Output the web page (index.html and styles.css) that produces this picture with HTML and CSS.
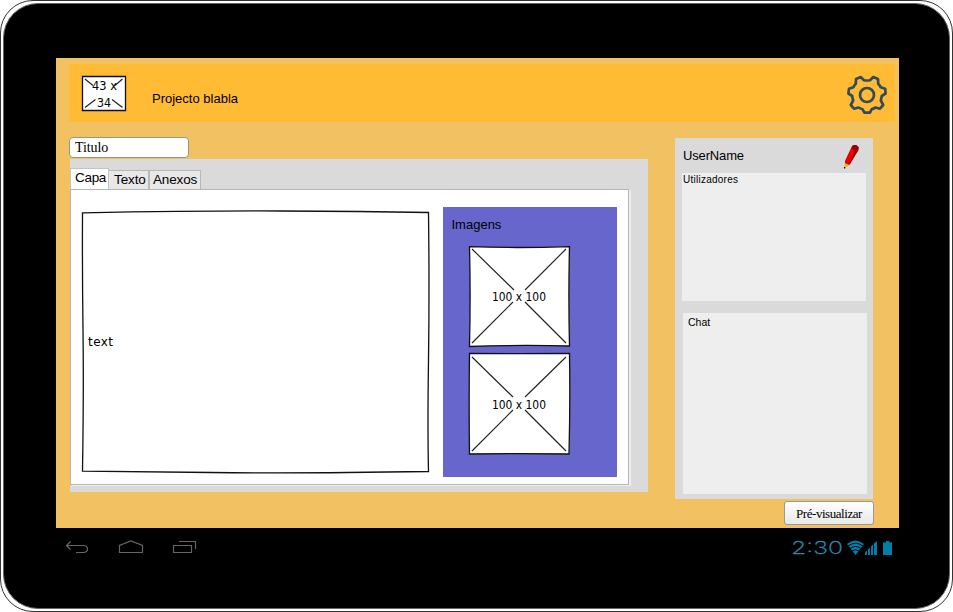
FILE: index.html
```html
<!DOCTYPE html>
<html lang="pt">
<head>
<meta charset="utf-8">
<title>Projecto blabla</title>
<link rel="stylesheet" href="styles.css">
</head>
<body>
<div class="tablet">
  <div class="bezel">
    <main class="screen">
      <header class="header">
        <svg class="logo" width="46" height="37" viewBox="0 0 46 37">
          <path class="frame" d="M1.500 1.500H44.500V35.500H1.500Z"/>
          <path class="cross" d="M4 4L12 10.500M41.500 4L34 10.500M4 32.500L14.500 24.500M41.500 32.500L31 24.500"/>
          <text x="11" y="15" textLength="25" lengthAdjust="spacingAndGlyphs">43 x</text>
          <text x="16" y="32" textLength="14" lengthAdjust="spacingAndGlyphs">34</text>
        </svg>
        <h1 class="project">Projecto blabla</h1>
        <svg class="gear" width="42" height="42" viewBox="-21 -21 42 42">
          <path d="M-6.300-18L-3-14.800Q0-14.200 3-14.800L6.300-18L11-16L11.200-11.300Q13-9.500 13.600-7.800L18.200-6.300L18.600-1.500L14.800 1Q14.200 4 13.800 5.500L16.200 10L13 13.700L8.500 12.500Q6.300 13.800 4.700 14.200L3 17.600H-2.600L-4.500 14.200Q-7 13.500-8.500 12.500L-13 13.700L-16.200 10L-13.800 5.500Q-14.600 3-14.800 1L-18.600-1.500L-18-6.300L-13.600-7.800Q-12.500-10-11.200-11.300L-11-16Z"/>
          <circle r="7"/>
        </svg>
      </header>
      <div class="columns">
        <section class="editor">
          <input class="title" type="text" value="Titulo" aria-label="Titulo">
          <div class="panel">
            <nav class="tabs">
              <span class="tab active">Capa</span><span class="tab texto">Texto</span><span class="tab anexos">Anexos</span>
            </nav>
            <div class="page">
              <svg class="textbox" width="350" height="264" viewBox="0 0 350 264">
                <path class="frame" d="M1.500 2.800Q120 .7 200 1T347.500 2.500Q348.500 80 347.500 150T347.500 261.500Q220 263.500 130 262.500T1.500 261.200Q2.800 180 2 120T1.500 2.800Z"/>
                <text class="hand" x="7" y="136" textLength="25">text</text>
              </svg>
              <section class="images">
                <h2>Imagens</h2>
                <svg class="thumb" width="103" height="103" viewBox="0 0 103 103">
                  <path class="frame" d="M1.500 1.700Q50 3.300 101.500 1.600Q100.300 50 101.500 101Q50 99.700 1.500 101.500Q2.700 50 1.500 1.700Z"/>
                  <path class="cross" d="M4 4L46 45M98 4L57 45M4 98L45 57M98 98L57 57"/>
                  <text x="24" y="55.500" textLength="54" lengthAdjust="spacingAndGlyphs">100 x 100</text>
                </svg>
                <svg class="thumb" width="103" height="103" viewBox="0 0 103 103">
                  <path class="frame" d="M1.500 1.500Q50 1.800 101.500 1.500Q102.300 50 101 102Q50 101.200 1.500 102Q.8 50 1.500 1.500Z"/>
                  <path class="cross" d="M4 5L45 45M98 5L57 45M4 99L45 58M98 99L57 58"/>
                  <text x="24" y="56.500" textLength="54" lengthAdjust="spacingAndGlyphs">100 x 100</text>
                </svg>
              </section>
            </div>
          </div>
        </section>
        <aside class="side">
          <div class="social">
            <div class="user">
              <span>UserName</span>
              <svg width="18" height="26" viewBox="0 0 18 26">
                <path fill="#e00000" d="M9 2L12 1L15.500 3V5L7 20L4 22L2 20V17Z"/>
                <path fill="#900" d="M9 2L11 1H13.500L15.500 3V6L7 20L5.500 21L12 7L9 5Z"/>
                <path fill="#f00000" d="M8.500 5L11 7L5 19L3 18Z"/>
                <path fill="#e5b91c" d="M2 19L6 21L2 24H1Z"/>
                <path d="M1 23H2.200V24.500H1Z"/>
              </svg>
            </div>
            <div class="users">Utilizadores</div>
            <div class="chat">Chat</div>
          </div>
          <button class="preview" type="button">Pré-visualizar</button>
        </aside>
      </div>
    </main>
    <footer class="system">
      <svg class="nav" width="132" height="16" viewBox="0 0 132 16">
        <path d="M5.500 1.500L1.500 5.500L5.500 9.500M1.500 5.500H19Q22.500 6 22.500 9T19 12.500H11M54.500 12.500V5.500L66 1L77.500 5.500V12.500ZM108.500 5.500H126.500V12.500H108.500ZM114 1.500H130.500V9"/>
      </svg>
      <svg class="status" width="110" height="26" viewBox="-6 -4 110 26">
        <text class="clock" x="-1" y="15" textLength="52" lengthAdjust="spacingAndGlyphs">2:30</text>
        <path class="solid" d="M55 5Q63 -2 72 5L63.500 16ZM73 16V13.500L75 11.500V16ZM76 16V10.500L78 8.500V16ZM79 16V7.500L81 5.500V16ZM82 16V4.500L85 2V16ZM91 3.500H94V2H97.500V3.500H100V16H91Z"/>
        <path class="gap" d="M56 7Q63.500 1.500 71 7M58 9.500Q63.500 5.500 69 9.500M60 12Q63.500 9.500 67 12"/>
      </svg>
    </footer>
  </div>
</div>
</body>
</html>
```
FILE: styles.css
```css
* { box-sizing: border-box; }
body { margin: 0; background: #fff; font: 13px/16px "Liberation Sans", Arial, sans-serif; color: #000; }
svg { display: block; flex: none; }
h1, h2 { margin: 0; font-size: 13px; font-weight: 400; }

.tablet { width: 953px; height: 612px; border: 1px solid #333; border-radius: 33px; padding: 2px; background: #fff; }
.bezel { height: 606px; border: 1px solid #666; border-radius: 35px; background: #000; padding: 54px 0 0 52px; }
.screen { width: 843px; height: 470px; background: #f2c262; padding: 6px 4px 0 13px; }

.header { height: 58px; background: #ffbb33; display: flex; align-items: flex-start; }
.logo { margin: 11px 0 0 12px; }
.project { margin: 27px auto 0 25px; letter-spacing: 0; }
.gear { margin: 10px 7px 0 0; fill: none; stroke: #34495e; stroke-width: 2.7; stroke-linejoin: round; }

.frame { fill: #fff; stroke: #111; stroke-width: 1.3; }
.cross { fill: none; stroke: #222; stroke-width: 1.15; }
svg text { font: 12px "DejaVu Sans Condensed", "DejaVu Sans", sans-serif; }
svg .hand { font: 12px "DejaVu Sans", sans-serif; }

.columns { display: flex; justify-content: space-between; align-items: flex-start; padding-right: 21px; }
.editor { width: 579px; padding-top: 15px; }
.title { display: block; width: 120px; height: 21px; border: 1px solid #9c9484; border-radius: 4px; padding: 0 5px; background: #fff; color: #000; font: 14px "Liberation Serif", "Times New Roman", serif; letter-spacing: -.1px; outline: 0; }
.panel { margin: 1px 0 0 1px; height: 333px; background: #dadada; padding-top: 9px; }
.tabs { display: flex; align-items: flex-end; height: 21px; font-size: 13.500px; }
.tab { height: 19px; padding: 1px 0 0 3px; border: 1px solid #b8b8b8; border-bottom: 0; background: #e8e8e8; line-height: 16px; white-space: nowrap; }
.tab.active { width: 39px; height: 21px; padding: 1px 0 0 4px; background: #fff; border-color: #c4c4c4; letter-spacing: -.3px; }
.texto { width: 40px; border-left: 0; padding-left: 5px; letter-spacing: -.1px; }
.anexos { width: 52px; letter-spacing: -.15px; }
.page { width: 559px; height: 296px; border: 1px solid #b5b5b5; background: #fff; box-shadow: 2px 1px 0 #eee; display: flex; align-items: flex-start; }
.textbox { margin: 20px 0 0 10px; }
.images { width: 174px; height: 270px; margin: 17px 0 0 12px; padding: 10px 0 0 8.500px; background: #6666cc; }
.images .thumb { margin: 12px 0 0 16.500px; }
.images .thumb + .thumb { margin-top: 4px; }

.side { width: 199px; padding-top: 16px; display: flex; flex-direction: column; align-items: flex-end; }
.social { width: 198px; height: 361px; margin-right: 1px; background: #dadada; }
.user { height: 35px; display: flex; justify-content: space-between; padding: 6px 12px 0 8px; }
.user span { padding-top: 4px; letter-spacing: -.15px; }
.users { width: 184px; height: 128px; margin-left: 7px; padding-left: 1px; background: #eee; font-size: 10px; line-height: 14px; letter-spacing: .25px; }
.chat { width: 184px; height: 181px; margin: 12px 0 0 8px; padding: 2px 0 0 5px; background: #eee; font-size: 10.500px; line-height: 15px; }
.preview { width: 90px; height: 24px; margin-top: 2px; padding: 2px 0 0; border: 1px solid #999; border-radius: 3px; background: linear-gradient(#fff, #e8e8e8); color: #000; font: 13px "Liberation Serif", "Times New Roman", serif; letter-spacing: -.45px; }

.system { display: flex; justify-content: space-between; align-items: flex-start; padding: 7px 53px 0 9px; }
.nav { margin-top: 5px; fill: none; stroke: #666; stroke-width: 1.2; }
.status .clock { font: 200 18px Inter, "Open Sans", sans-serif; fill: #2a8cb0; stroke: #2a8cb0; stroke-width: .3; }
.solid { fill: #007fad; }
.gap { fill: none; stroke: #000; stroke-width: 1; }
```
